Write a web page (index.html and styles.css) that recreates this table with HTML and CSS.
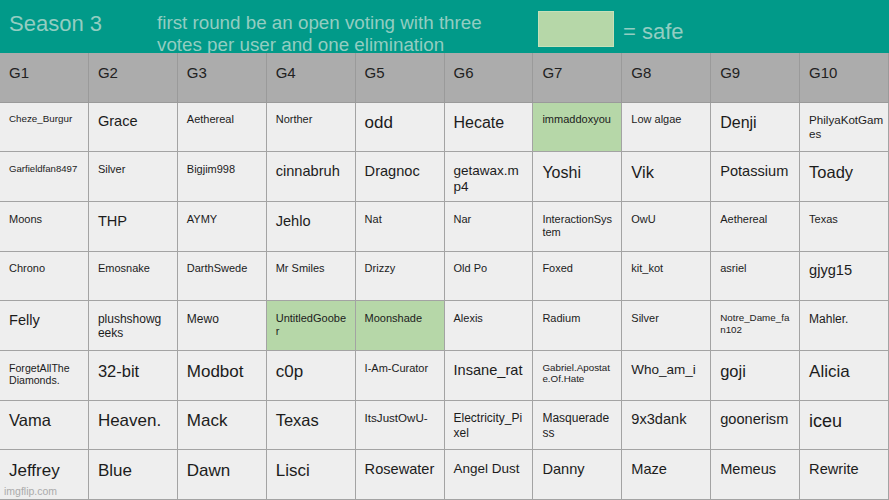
FILE: index.html
```html
<!DOCTYPE html>
<html lang="en">
<head>
<meta charset="utf-8">
<title>Season 3</title>
<link rel="stylesheet" href="styles.css">
</head>
<body>
<div class="page">
  <header class="bar">
    <div class="title">Season 3</div>
    <div class="desc">first round be an open voting with three<br>votes per user and one elimination</div>
    <div class="swatch"></div>
    <div class="safe">= safe</div>
  </header>
  <div class="grid">
    <div class="c h">G1</div><div class="c h">G2</div><div class="c h">G3</div><div class="c h">G4</div><div class="c h">G5</div><div class="c h">G6</div><div class="c h">G7</div><div class="c h">G8</div><div class="c h">G9</div><div class="c h">G10</div>

    <div class="c f10">Cheze_Burgur</div><div class="c f145">Grace</div><div class="c f11">Aethereal</div><div class="c f11">Norther</div><div class="c f17">odd</div><div class="c f16">Hecate</div><div class="c f11 g">immaddoxyou</div><div class="c f11">Low algae</div><div class="c f16">Denji</div><div class="c f115">PhilyaKotGam<br>es</div>

    <div class="c f95">Garfieldfan8497</div><div class="c f11">Silver</div><div class="c f11">Bigjim998</div><div class="c f145">cinnabruh</div><div class="c f145">Dragnoc</div><div class="c f135">getawax.m<br>p4</div><div class="c f16">Yoshi</div><div class="c f165">Vik</div><div class="c f145">Potassium</div><div class="c f165">Toady</div>

    <div class="c f11">Moons</div><div class="c f145">THP</div><div class="c f11">AYMY</div><div class="c f145">Jehlo</div><div class="c f11">Nat</div><div class="c f11">Nar</div><div class="c f11">InteractionSys<br>tem</div><div class="c f11">OwU</div><div class="c f11">Aethereal</div><div class="c f11">Texas</div>

    <div class="c f11">Chrono</div><div class="c f11">Emosnake</div><div class="c f11">DarthSwede</div><div class="c f11">Mr Smiles</div><div class="c f11">Drizzy</div><div class="c f11">Old Po</div><div class="c f11">Foxed</div><div class="c f11">kit_kot</div><div class="c f11">asriel</div><div class="c f145">gjyg15</div>

    <div class="c f145">Felly</div><div class="c f12">plushshowg<br>eeks</div><div class="c f12">Mewo</div><div class="c f11 g">UntitledGoobe<br>r</div><div class="c f11 g">Moonshade</div><div class="c f11">Alexis</div><div class="c f11">Radium</div><div class="c f11">Silver</div><div class="c f10">Notre_Dame_fa<br>n102</div><div class="c f12">Mahler.</div>

    <div class="c f105">ForgetAllThe<br>Diamonds.</div><div class="c f165">32-bit</div><div class="c f17">Modbot</div><div class="c f17">c0p</div><div class="c f11">I-Am-Curator</div><div class="c f145">Insane_rat</div><div class="c f10">Gabriel.Apostat<br>e.Of.Hate</div><div class="c f135">Who_am_i</div><div class="c f165">goji</div><div class="c f17">Alicia</div>

    <div class="c f165">Vama</div><div class="c f17">Heaven.</div><div class="c f17">Mack</div><div class="c f165">Texas</div><div class="c f115">ItsJustOwU-</div><div class="c f12">Electricity_Pi<br>xel</div><div class="c f12">Masquerade<br>ss</div><div class="c f145">9x3dank</div><div class="c f145">goonerism</div><div class="c f18">iceu</div>

    <div class="c f17">Jeffrey</div><div class="c f17">Blue</div><div class="c f17">Dawn</div><div class="c f17">Lisci</div><div class="c f145">Rosewater</div><div class="c f135">Angel Dust</div><div class="c f145">Danny</div><div class="c f145">Maze</div><div class="c f145">Memeus</div><div class="c f145">Rewrite</div>
  </div>
  <div class="wm">imgflip.com</div>
</div>
</body>
</html>
```

FILE: styles.css
```css
html, body {
  margin: 0;
  padding: 0;
  background: #eeeeee;
}

.page {
  position: relative;
  width: 889px;
  height: 500px;
  overflow: hidden;
  font-family: "Liberation Sans", Arial, sans-serif;
  color: #1c1c1c;
}

.bar {
  display: flex;
  align-items: flex-start;
  height: 53px;
  padding-left: 9px;
  background: #019a89;
  color: #93cdc1;
  overflow: hidden;
  box-sizing: border-box;
}

.title {
  flex: 0 0 148px;
  margin-top: 11px;
  font-size: 22px;
  line-height: 26px;
}

.desc {
  flex: 0 0 381px;
  margin-top: 12px;
  font-size: 18.8px;
  line-height: 21.5px;
  white-space: nowrap;
}

.swatch {
  flex: 0 0 76px;
  height: 36px;
  margin-top: 11px;
  box-sizing: border-box;
  background: #b6d7a8;
  border: 1px solid #c6e0b9;
}

.safe {
  margin-left: 9px;
  margin-top: 18.5px;
  font-size: 22px;
  line-height: 26px;
}

.grid {
  display: grid;
  grid-template-columns: repeat(10, 1fr);
  grid-template-rows: repeat(9, 1fr);
  height: 447px;
}

.c {
  box-sizing: border-box;
  padding: 10.5px 2px 0 9px;
  background: #eeeeee;
  border-right: 1px solid #a3a3a3;
  border-bottom: 1px solid #a3a3a3;
  line-height: 1.2;
  white-space: nowrap;
  overflow: hidden;
}

.h {
  background: #acacac;
  border-color: #9a9a9a;
  font-size: 15px;
  color: #222;
  padding-top: 10.5px;
}

.g { background: #b6d7a8; }

.f95 { font-size: 9.6px; }
.f10 { font-size: 9.8px; }
.f105 { font-size: 10.6px; }
.f11 { font-size: 11px; }
.f115 { font-size: 11.6px; }
.f12 { font-size: 12px; }
.f135 { font-size: 13.5px; }
.f145 { font-size: 14.6px; }
.f16 { font-size: 16px; }
.f165 { font-size: 16.5px; }
.f17 { font-size: 17px; }
.f18 { font-size: 18px; }

.wm {
  position: absolute;
  left: 4px;
  bottom: 3px;
  font-size: 10.5px;
  line-height: 12px;
  color: #ababab;
}
```
